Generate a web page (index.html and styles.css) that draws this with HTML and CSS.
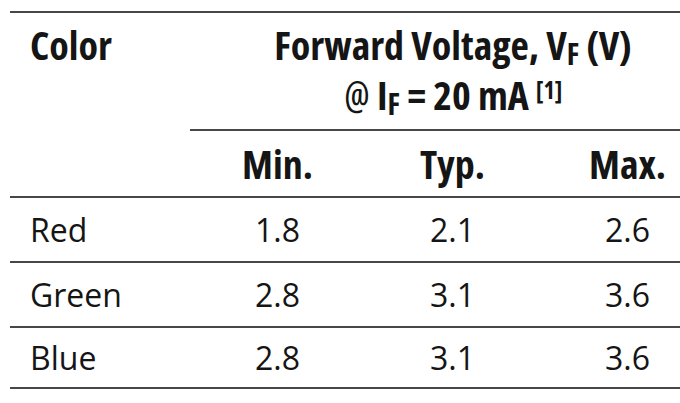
FILE: index.html
```html
<!DOCTYPE html>
<html lang="en">
<head>
<meta charset="utf-8">
<title>Forward Voltage</title>
<link rel="stylesheet" href="styles.css">
</head>
<body>
<table class="spec">
  <colgroup>
    <col class="c-name">
    <col class="c-val">
    <col class="c-val">
    <col class="c-end">
  </colgroup>
  <thead>
    <tr class="group-row">
      <th class="label-head" rowspan="2">Color</th>
      <th class="group-head" colspan="3">
        <div class="line">Forward Voltage, V<sub>F</sub> (V)</div>
        <div class="line"><span class="at">@</span> I<sub>F</sub> = 20 mA <sup>[1]</sup></div>
      </th>
    </tr>
    <tr class="sub-row">
      <th class="col-head">Min.</th>
      <th class="col-head">Typ.</th>
      <th class="col-head end">Max.</th>
    </tr>
  </thead>
  <tbody>
    <tr><td class="name">Red</td><td>1.8</td><td>2.1</td><td class="end">2.6</td></tr>
    <tr><td class="name">Green</td><td>2.8</td><td>3.1</td><td class="end">3.6</td></tr>
    <tr class="last"><td class="name">Blue</td><td>2.8</td><td>3.1</td><td class="end">3.6</td></tr>
  </tbody>
</table>
</body>
</html>
```
FILE: styles.css
```css
html, body {
  margin: 0;
  padding: 0;
  background: #ffffff;
  overflow: hidden;
}
body {
  width: 680px;
  height: 403px;
}
.spec {
  margin: 11px 0 0 10px;
  border-collapse: collapse;
  table-layout: fixed;
  width: 670px;
  color: #151515;
  font-family: "Open Sans", "Noto Sans", sans-serif;
  font-size: 32px;
}
.c-name { width: 180px; }
.c-val { width: 175px; }
.c-end { width: 140px; }
.spec th,
.spec td {
  padding: 0;
}
.spec th {
  font-family: "Open Sans", "Noto Sans", sans-serif;
  font-stretch: 75%;
  font-weight: bold;
  font-size: 40px;
  line-height: 50px;
}
.group-row th {
  border-top: 2px solid #474747;
}
.spec .label-head {
  text-align: left;
  vertical-align: top;
  padding: 7px 0 0 20px;
  border-bottom: 2px solid #474747;
}
.spec .group-head {
  text-align: center;
  vertical-align: top;
  height: 109px;
  padding: 7px 0 0 36px;
  border-bottom: 2px solid #474747;
}
.spec sub {
  font-size: 30px;
  line-height: 0;
  vertical-align: -5px;
}
.spec sup {
  font-size: 24px;
  line-height: 0;
  vertical-align: 11px;
}
.at {
  font-weight: normal;
}
.spec .col-head {
  height: 65px;
  text-align: center;
  vertical-align: middle;
  border-bottom: 2px solid #474747;
}
.spec td {
  height: 63px;
  text-align: center;
  vertical-align: middle;
  border-bottom: 2px solid #474747;
}
.spec .end {
  padding-left: 35px;
}
.spec .last td {
  height: 59px;
}
.spec td.name {
  text-align: left;
  padding-left: 20px;
}
```
